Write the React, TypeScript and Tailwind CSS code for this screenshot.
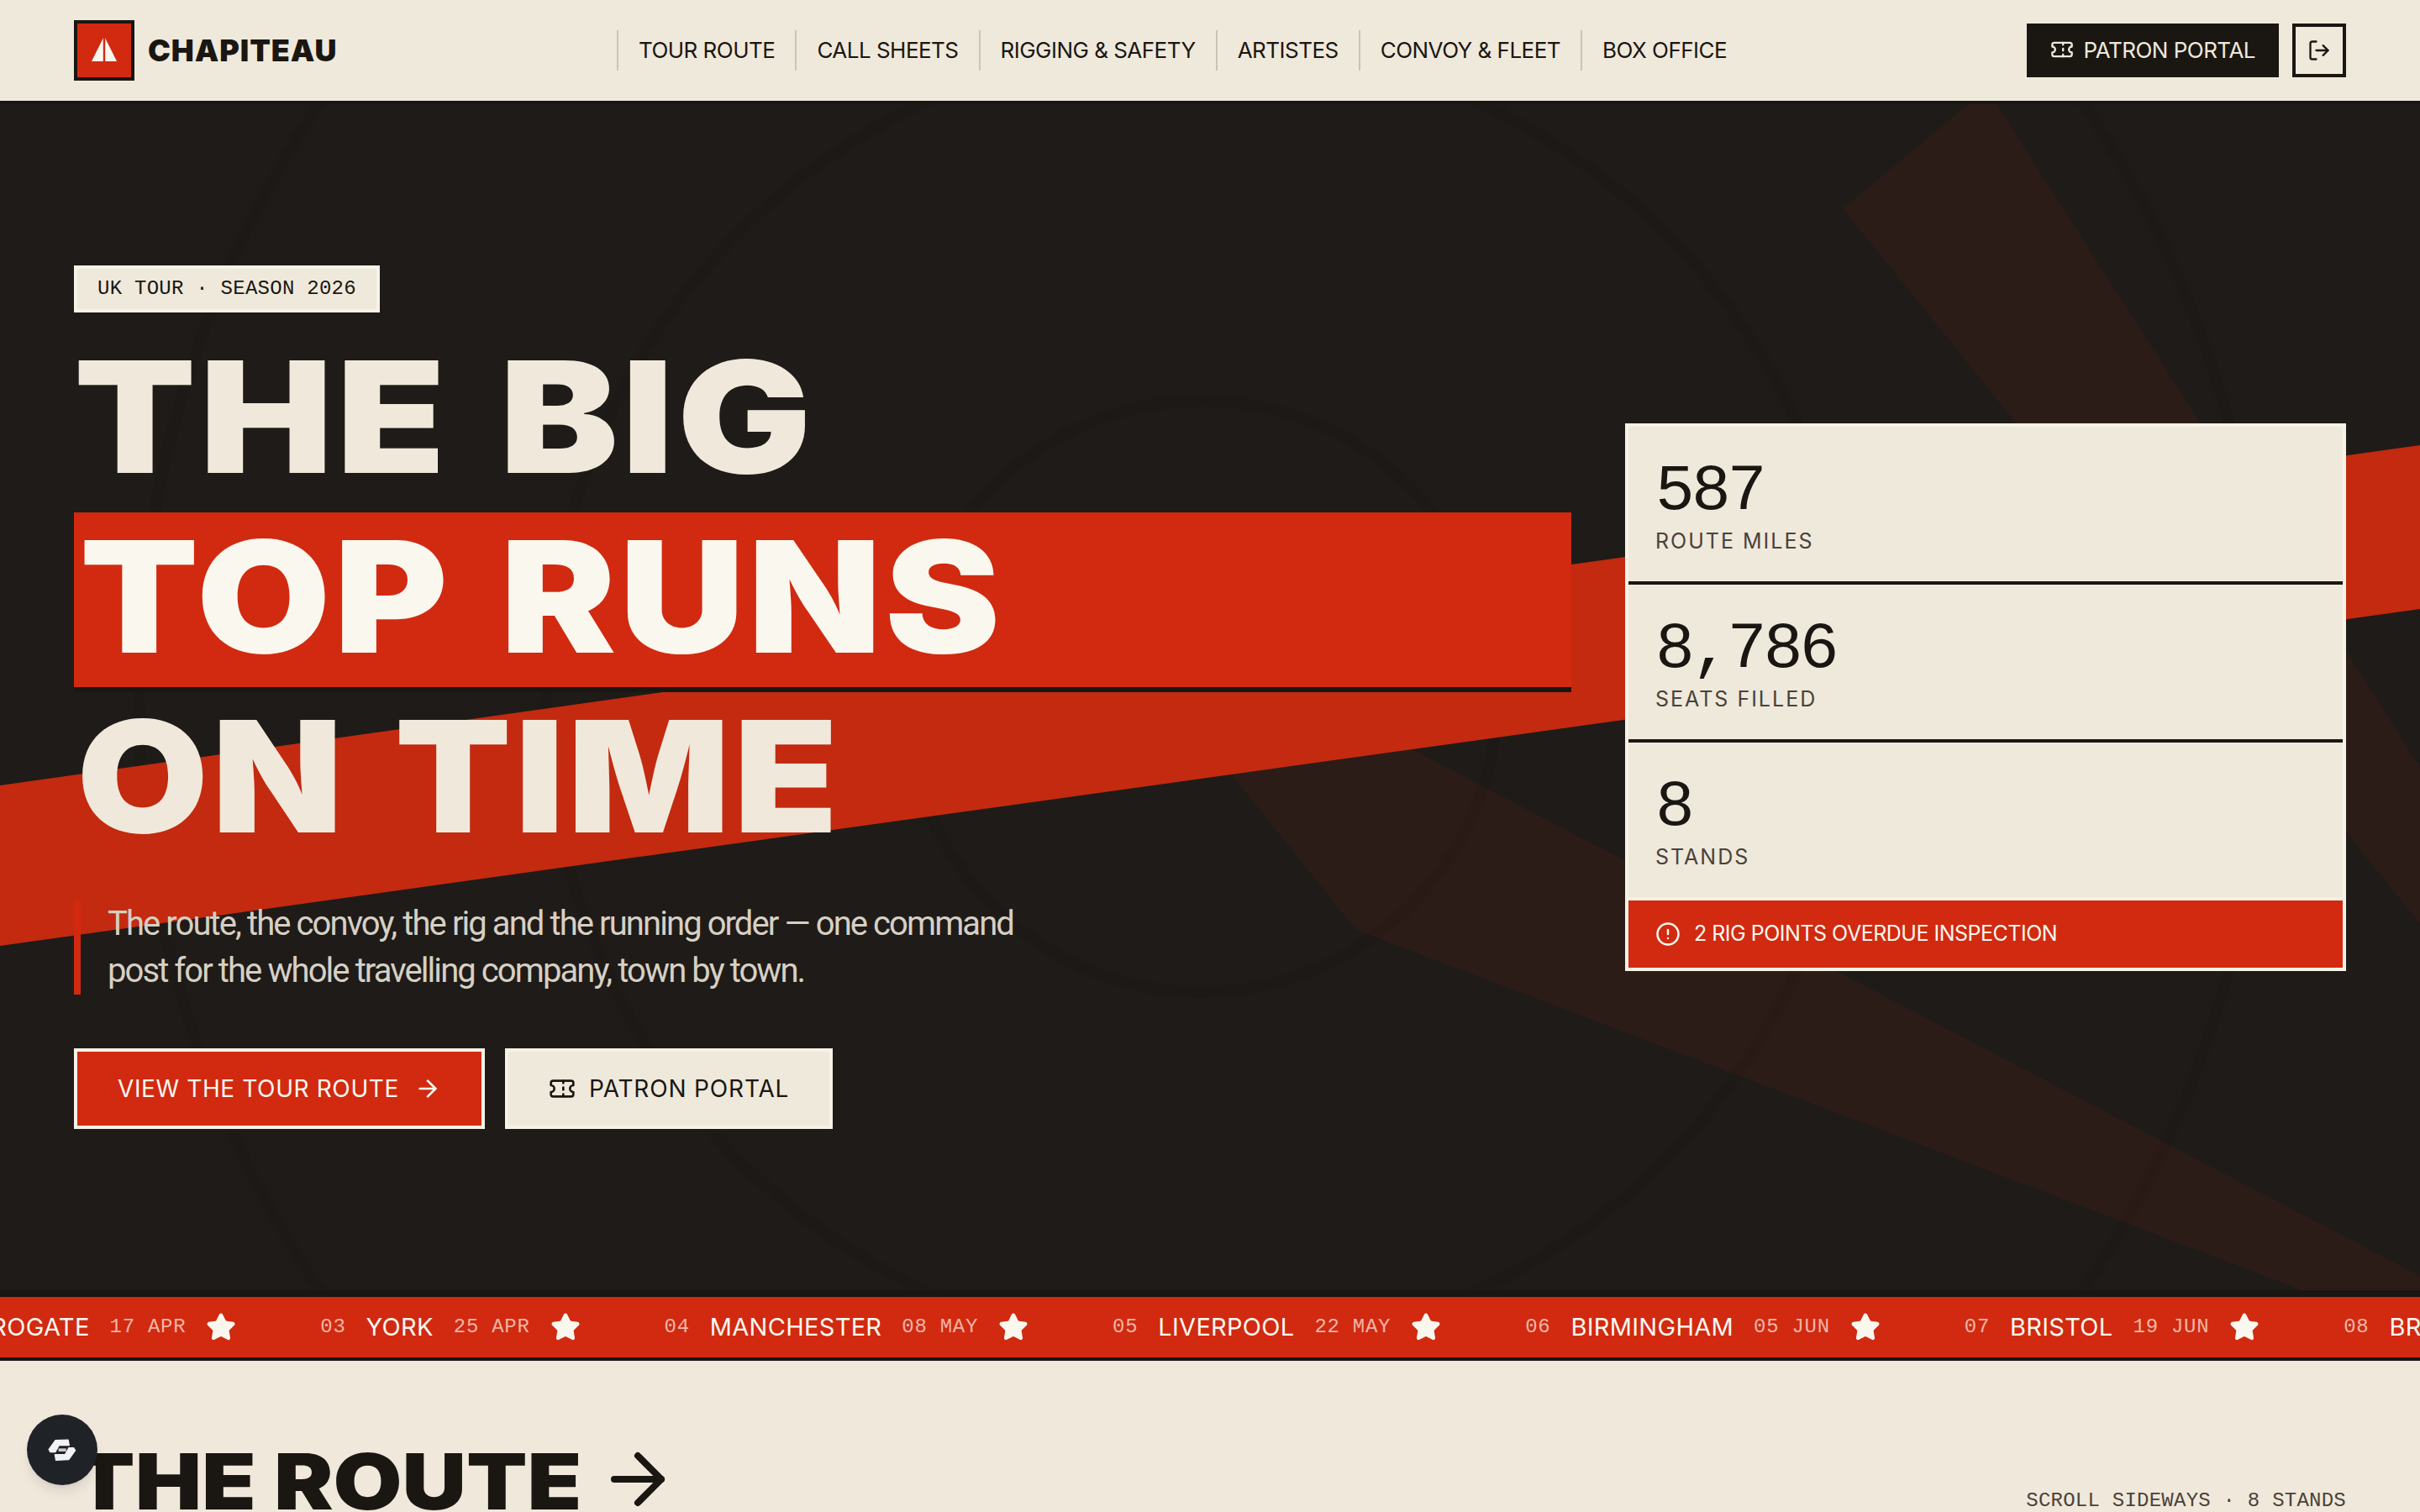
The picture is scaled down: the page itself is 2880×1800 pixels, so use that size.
import { ArrowRight, CircleAlert, LogOut, Star, Ticket } from 'lucide-react';

const navLinks = ['TOUR ROUTE', 'CALL SHEETS', 'RIGGING & SAFETY', 'ARTISTES', 'CONVOY & FLEET', 'BOX OFFICE'];

const stats = [
  { value: '587', label: 'ROUTE MILES' },
  { value: '8,786', label: 'SEATS FILLED' },
  { value: '8', label: 'STANDS' },
];

const stands = [
  { num: '02', town: 'HARROGATE', date: '17 APR' },
  { num: '03', town: 'YORK', date: '25 APR' },
  { num: '04', town: 'MANCHESTER', date: '08 MAY' },
  { num: '05', town: 'LIVERPOOL', date: '22 MAY' },
  { num: '06', town: 'BIRMINGHAM', date: '05 JUN' },
  { num: '07', town: 'BRISTOL', date: '19 JUN' },
  { num: '08', town: 'BRIGHTON', date: '03 JUL' },
];

function Backdrop() {
  return (
    <svg className="absolute inset-0 h-full w-full" viewBox="0 124 2880 1412" preserveAspectRatio="none">
      <polygon points="2193,248 2343,124 2376,124 2880,913 2880,1100" fill="#2c1c18" />
      <polygon points="1400,840 1614,1107 2740,1536 2880,1536 2880,1519 1600,850" fill="#2c1c18" />
      <g fill="none" stroke="#000" strokeOpacity="0.06" strokeWidth="14">
        <circle cx="1430" cy="829" r="352" />
        <circle cx="1430" cy="829" r="780" />
        <circle cx="1430" cy="829" r="1265" />
      </g>
      <polygon points="0,935 2880,530 2880,725 0,1126" fill="#c32a10" />
    </svg>
  );
}

function Header() {
  return (
    <header className="flex h-[124px] items-center justify-between border-b-4 border-[#1a1612] bg-[#efe9db] px-[88px]">
      <div className="flex items-center gap-4">
        <div className="flex h-[72px] w-[72px] items-center justify-center border-4 border-[#1a1612] bg-[#d12a10]">
          <svg className="mb-1" width="32" height="32" viewBox="0 0 32 32">
            <polygon points="16,1 1,31 31,31" fill="#faf7ef" />
            <rect x="14.8" y="0" width="2.4" height="31" fill="#d12a10" />
          </svg>
        </div>
        <span className="text-[36px] font-black leading-none tracking-[0.025em] text-[#1a1612]">CHAPITEAU</span>
      </div>
      <nav className="flex items-center">
        {navLinks.map((link) => (
          <a key={link} className="flex h-12 items-center border-l-2 border-[#c9c4b8] px-6 pb-[2px] text-[26px] tracking-[-0.02em] text-[#1a1612]">
            {link}
          </a>
        ))}
      </nav>
      <div className="flex items-center gap-4">
        <button className="flex h-16 items-center gap-3 bg-[#1a1612] px-7 pb-[2px] text-[26px] tracking-[-0.02em] text-[#efe9db]">
          <Ticket size={28} />
          PATRON PORTAL
        </button>
        <button className="flex h-16 w-16 items-center justify-center border-4 border-[#1a1612] text-[#1a1612]">
          <LogOut size={28} />
        </button>
      </div>
    </header>
  );
}

function Hero() {
  return (
    <section className="relative flex h-[1412px] items-center overflow-hidden bg-[#1f1b18] px-[88px]">
      <Backdrop />
      <div className="relative grid w-full grid-cols-[1782px_858px] items-center gap-16">
        <div>
          <div className="inline-block border-4 border-[#f6f2e6] bg-[#efe9db] px-6 font-['Liberation_Mono',monospace] text-[24px] leading-[48px] tracking-[0.26px] text-[#1a1612]">
            UK TOUR · SEASON 2026
          </div>
          <h1 className="mt-[17px] text-[184px] font-black leading-[214px] tracking-[0.02em] text-[#f0e9db] [word-spacing:12px]">
            <div className="origin-left scale-x-[1.15]">THE BIG</div>
            <div className="mt-[7px] h-[214px] border-b-[6px] border-[#1a1612] bg-[#d12a10] pl-[7px] leading-[200px] text-[#faf7ef]">
              <div className="origin-left scale-x-[1.12]">TOP RUNS</div>
            </div>
            <div className="-mt-[7px] origin-left scale-x-[1.1] pl-[3px]">ON TIME</div>
          </h1>
          <p className="mt-[41px] border-l-8 border-[#d12a10] pl-8 font-[Roboto,sans-serif] text-[40px] leading-[56px] tracking-[-0.048em] text-[#d6d0c4]">
            The route, the convoy, the rig and the running order — one command
            <br />
            post for the whole travelling company, town by town.
          </p>
          <div className="mt-16 flex gap-6">
            <button className="flex h-24 items-center gap-[18px] border-4 border-[#f6f2e6] bg-[#d12a10] px-12 text-[28px] tracking-[0.022em] text-[#faf7ef]">
              VIEW THE TOUR ROUTE
              <ArrowRight size={32} />
            </button>
            <button className="flex h-24 items-center gap-4 border-4 border-[#f6f2e6] bg-[#efe9db] px-12 text-[28px] tracking-[0.03em] text-[#1a1612]">
              <Ticket size={32} />
              PATRON PORTAL
            </button>
          </div>
        </div>
        <aside className="border-4 border-[#f6f2e6] bg-[#efe9db]">
          {stats.map((stat, i) => (
            <div key={stat.label} className={`px-8 pt-[41px] ${i < 2 ? 'h-[188px] border-b-4 border-[#1a1612]' : 'h-[184px]'}`}>
              <div className="font-['Liberation_Mono',monospace] text-[78px] leading-[72px] tracking-[-0.05em] text-[#1a1612]">{stat.value}</div>
              <div className="mt-[7px] text-[25px] leading-8 tracking-[0.08em] text-[#4a423a]">{stat.label}</div>
            </div>
          ))}
          <div className="flex h-[84px] items-center gap-4 border-t-4 border-[#f6f2e6] bg-[#d12a10] px-8 text-[25px] tracking-[-0.02em] text-[#faf7ef]">
            <CircleAlert size={30} />
            2 RIG POINTS OVERDUE INSPECTION
          </div>
        </aside>
      </div>
    </section>
  );
}

function Marquee() {
  return (
    <div className="flex h-[84px] items-center overflow-hidden border-t-8 border-b-4 border-[#1a1612] bg-[#d12a10] text-[#faf7ef]">
      <div className="-ml-[126px] flex shrink-0 items-center gap-[100px]">
        {stands.map((s) => (
          <div key={s.num} className="flex shrink-0 items-center gap-6">
            <span className="font-['Liberation_Mono',monospace] text-[24px] tracking-[0.03em] text-[#f3b5a6]">{s.num}</span>
            <span className="text-[29px] tracking-[0.01em]">{s.town}</span>
            <span className="font-['Liberation_Mono',monospace] text-[24px] tracking-[0.03em] text-[#f3b5a6]">{s.date}</span>
            <Star size={36} fill="currentColor" />
          </div>
        ))}
      </div>
    </div>
  );
}

function RouteIntro() {
  return (
    <section className="flex items-end justify-between bg-[#f0e8db] px-[88px] pt-24">
      <div className="flex items-center gap-[97px]">
        <h2 className="origin-left scale-x-[1.15] text-[92px] font-black leading-[96px] text-[#1a1612]">THE ROUTE</h2>
        <ArrowRight size={96} className="-mt-[6px] text-[#1a1612]" />
      </div>
      <div className="mb-[7px] font-['Liberation_Mono',monospace] text-[24px] tracking-[0.01em] text-[#4a423a]">
        SCROLL SIDEWAYS · 8 STANDS
      </div>
    </section>
  );
}

function HelpBadge() {
  return (
    <div className="fixed bottom-8 left-8 flex h-[84px] w-[84px] items-center justify-center rounded-full bg-[#1f2327] shadow-lg">
      <svg width="38" height="32" viewBox="100 115 125 105" fill="#f2f2f5" stroke="#f2f2f5" strokeWidth="4" strokeLinejoin="round">
        <polygon points="110,166 136,130 186,128 190,150 150,150 136,176 116,176" />
        <polygon points="214,170 188,206 138,208 134,186 174,186 188,160 208,160" />
        <rect x="148" y="162" width="30" height="12" fill="#c9cace" stroke="none" />
      </svg>
    </div>
  );
}

export default function App() {
  return (
    <div className="h-[1800px] overflow-hidden bg-[#f0e8db] font-[Inter,sans-serif]">
      <Header />
      <Hero />
      <Marquee />
      <RouteIntro />
      <HelpBadge />
    </div>
  );
}
